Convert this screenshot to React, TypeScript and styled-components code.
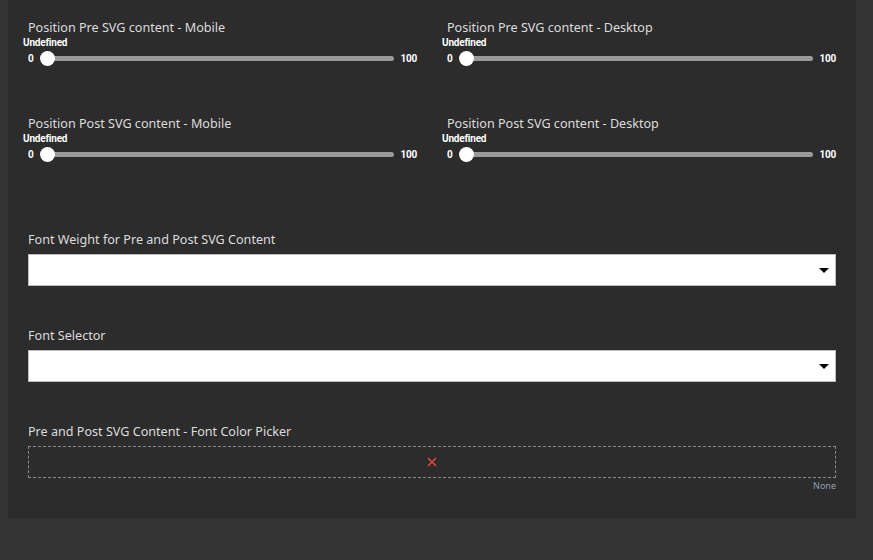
import React from 'react';
import styled, { createGlobalStyle } from 'styled-components';

const GlobalStyle = createGlobalStyle`
  html, body {
    margin: 0;
    padding: 0;
    background: #333333;
  }
  body {
    font-family: 'Noto Sans', 'Open Sans', sans-serif;
  }
`;

const Page = styled.div`
  width: 873px;
  height: 560px;
  background: #333333;
  overflow: hidden;
`;

const Panel = styled.div`
  margin-left: 8px;
  width: 848px;
  height: 518px;
  box-sizing: border-box;
  padding: 19px 20px 0 20px;
  background: #2c2c2c;
`;

const SliderGrid = styled.div`
  display: grid;
  grid-template-columns: 394px 394px;
  column-gap: 25px;
  row-gap: 48px;
  margin-left: -5px;
`;

const SliderBlock = styled.div`
  display: flex;
  flex-direction: column;
`;

const Label = styled.div<{ $indent?: boolean }>`
  font-size: 12.6px;
  line-height: 18px;
  color: #dcdcdc;
  padding-left: ${({ $indent }) => ($indent ? '5px' : '0')};
`;

const FieldLabel = styled(Label)`
  padding-top: 1px;
  line-height: 17px;
`;

const ValueTag = styled.div`
  font-family: Roboto, 'Liberation Sans', sans-serif;
  font-weight: 700;
  font-size: 10px;
  line-height: 12px;
  color: #ffffff;
  letter-spacing: -0.2px;
`;

const TrackRow = styled.div`
  display: flex;
  align-items: center;
  height: 18px;
  padding-left: 5px;
`;

const RangeEnd = styled.span`
  font-family: Roboto, 'Liberation Sans', sans-serif;
  font-weight: 700;
  font-size: 10px;
  color: #ffffff;
  letter-spacing: -0.2px;
`;

const Track = styled.div`
  position: relative;
  flex: 1;
  height: 5px;
  border-radius: 3px;
  background: #999999;
  margin: 0 6px 0 13px;
`;

const Thumb = styled.div`
  position: absolute;
  left: -7px;
  top: 50%;
  width: 15px;
  height: 15px;
  margin-top: -7.5px;
  border-radius: 50%;
  background: #ffffff;
`;

const Field = styled.div<{ $top: number }>`
  margin-top: ${({ $top }) => $top}px;
  display: flex;
  flex-direction: column;
  gap: 6px;
`;

const SelectBox = styled.div`
  height: 32px;
  box-sizing: border-box;
  border: 1px solid #bdbdbd;
  background: #ffffff;
  display: flex;
  align-items: center;
  justify-content: flex-end;
  padding-right: 6px;
`;

const Arrow = styled.div`
  width: 0;
  height: 0;
  border-left: 5px solid transparent;
  border-right: 5px solid transparent;
  border-top: 5px solid #000000;
`;

const ColorBox = styled.div`
  height: 32px;
  box-sizing: border-box;
  border: 1px dashed #8a8a8a;
  display: flex;
  align-items: center;
  justify-content: center;
`;

const ColorValue = styled.div`
  text-align: right;
  font-size: 9px;
  line-height: 12px;
  color: #8da0b4;
  margin-top: -4px;
`;

const sliders = [
  'Position Pre SVG content - Mobile',
  'Position Pre SVG content - Desktop',
  'Position Post SVG content - Mobile',
  'Position Post SVG content - Desktop',
];

const Slider: React.FC<{ label: string }> = ({ label }) => (
  <SliderBlock>
    <Label $indent>{label}</Label>
    <ValueTag>Undefined</ValueTag>
    <TrackRow>
      <RangeEnd>0</RangeEnd>
      <Track>
        <Thumb />
      </Track>
      <RangeEnd>100</RangeEnd>
    </TrackRow>
  </SliderBlock>
);

const App: React.FC = () => (
  <Page>
    <GlobalStyle />
    <Panel>
      <SliderGrid>
        {sliders.map(s => (
          <Slider key={s} label={s} />
        ))}
      </SliderGrid>
      <Field $top={67}>
        <FieldLabel>Font Weight for Pre and Post SVG Content</FieldLabel>
        <SelectBox>
          <Arrow />
        </SelectBox>
      </Field>
      <Field $top={40}>
        <FieldLabel>Font Selector</FieldLabel>
        <SelectBox>
          <Arrow />
        </SelectBox>
      </Field>
      <Field $top={40}>
        <FieldLabel>Pre and Post SVG Content - Font Color Picker</FieldLabel>
        <ColorBox>
          <svg width="10" height="10" viewBox="0 0 10 10">
            <path d="M1 1 L9 9 M9 1 L1 9" stroke="#e04848" strokeWidth="1.6" />
          </svg>
        </ColorBox>
        <ColorValue>None</ColorValue>
      </Field>
    </Panel>
  </Page>
);

export default App;
